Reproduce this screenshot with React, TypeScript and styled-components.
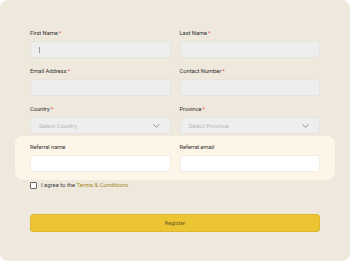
import React from "react";
import styled, { createGlobalStyle } from "styled-components";

const Global = createGlobalStyle`
  html, body { margin: 0; padding: 0; background: #ffffff; }
  body { font-family: Roboto, "Liberation Sans", Arial, sans-serif; }
  * { box-sizing: border-box; }
`;

const Card = styled.div`
  width: 350px;
  height: 261px;
  background: #efe8dd;
  border-radius: 8px;
  padding: 30px 30px 0 30px;
  display: flex;
  flex-direction: column;
`;

const Grid = styled.div`
  display: grid;
  grid-template-columns: 1fr 1fr;
  column-gap: 9px;
  row-gap: 10px;
`;

const Field = styled.div`
  display: flex;
  flex-direction: column;
  gap: 4px;
`;

const Label = styled.label`
  font-size: 5.8px;
  line-height: 7px;
  height: 7px;
  color: #333333;
  letter-spacing: -0.05px;
`;

const Star = styled.span`
  color: #e53935;
  margin-left: 1px;
`;

const Input = styled.div<{ $white?: boolean }>`
  height: 17px;
  border-radius: 3px;
  background: ${(p) => (p.$white ? "#ffffff" : "#eeeeee")};
  border: 0.5px solid ${(p) => (p.$white ? "#f3ece0" : "#e6e4e0")};
  display: flex;
  align-items: center;
  padding: 0 8px;
  font-size: 5.9px;
  color: #b8b8b8;
`;

const Caret = styled.span`
  width: 1px;
  height: 6px;
  background: #9a9a9a;
`;

const Select = styled(Input)`
  justify-content: space-between;
  padding: 0 10px 0 8px;
`;

const Referral = styled.div`
  grid-column: 1 / span 2;
  margin: -8px -15px 0 -15px;
  padding: 8px 15px 8px 15px;
  background: #fdf5e8;
  border-radius: 8px;
  display: grid;
  grid-template-columns: 1fr 1fr;
  column-gap: 9px;
`;

const AgreeRow = styled.div`
  display: flex;
  align-items: center;
  gap: 4px;
  margin-top: 1.5px;
  height: 7px;
  font-size: 5.9px;
  color: #444444;
`;

const Check = styled.span`
  width: 7px;
  height: 7px;
  border: 0.8px solid #666666;
  border-radius: 1px;
  background: #ffffff;
`;

const Terms = styled.span`
  color: #a58a1e;
`;

const Button = styled.button`
  margin-top: 25.5px;
  height: 18px;
  border: 0.5px solid #e0b830;
  border-radius: 3px;
  background: #ecc535;
  color: #6b5c22;
  font-family: inherit;
  font-size: 5.6px;
  padding: 0;
`;

const Chevron = () => (
  <svg width="7" height="4" viewBox="0 0 7 4">
    <path d="M0.5 0.5 L3.5 3.3 L6.5 0.5" fill="none" stroke="#777" strokeWidth="0.8" />
  </svg>
);

export default function App() {
  return (
    <>
      <Global />
      <Card>
        <Grid>
          <Field>
            <Label>
              First Name<Star>*</Star>
            </Label>
            <Input>
              <Caret />
            </Input>
          </Field>
          <Field>
            <Label>
              Last Name<Star>*</Star>
            </Label>
            <Input />
          </Field>
          <Field>
            <Label>
              Email Address<Star>*</Star>
            </Label>
            <Input />
          </Field>
          <Field>
            <Label>
              Contact Number<Star>*</Star>
            </Label>
            <Input />
          </Field>
          <Field>
            <Label>
              Country<Star>*</Star>
            </Label>
            <Select>
              <span>Select Country</span>
              <Chevron />
            </Select>
          </Field>
          <Field>
            <Label>
              Province<Star>*</Star>
            </Label>
            <Select>
              <span>Select Province</span>
              <Chevron />
            </Select>
          </Field>
          <Referral>
            <Field>
              <Label>Referral name</Label>
              <Input $white />
            </Field>
            <Field>
              <Label>Referral email</Label>
              <Input $white />
            </Field>
          </Referral>
        </Grid>
        <AgreeRow>
          <Check />
          <span>
            I agree to the <Terms>Terms &amp; Conditions</Terms>
          </span>
        </AgreeRow>
        <Button>Register</Button>
      </Card>
    </>
  );
}
